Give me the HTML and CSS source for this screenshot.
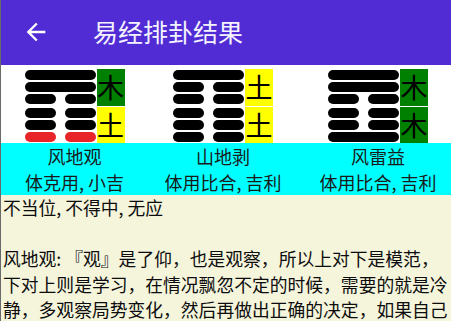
FILE: index.html
```html
<!DOCTYPE html>
<html lang="zh-CN">
<head>
<meta charset="utf-8">
<title>易经排卦结果</title>
<link rel="stylesheet" href="styles.css">
</head>
<body>
<div class="app">
  <header class="appbar">
    <svg class="back" viewBox="0 0 24 24" width="28" height="28" aria-hidden="true">
      <path fill="#fff" d="M20 11H7.830l5.59-5.59L12 4l-8 8 8 8 1.41-1.41L7.830 13H20v-2z"/>
    </svg>
    <h1 class="title">易经排卦结果</h1>
  </header>

  <section class="hexrow">
    <div class="col c1">
      <div class="hex">
        <div class="lines">
          <div class="line yang"></div>
          <div class="line yang"></div>
          <div class="line yin"><i></i><i></i></div>
          <div class="line yin lower"><i></i><i></i></div>
          <div class="line yin"><i></i><i></i></div>
          <div class="line yin moving"><i></i><i></i></div>
        </div>
        <div class="boxes">
          <div class="cell wood">木</div>
          <div class="cell earth">土</div>
        </div>
      </div>
    </div>
    <div class="col c2">
      <div class="hex">
        <div class="lines">
          <div class="line yang"></div>
          <div class="line yin"><i></i><i></i></div>
          <div class="line yin"><i></i><i></i></div>
          <div class="line yin lower"><i></i><i></i></div>
          <div class="line yin"><i></i><i></i></div>
          <div class="line yin"><i></i><i></i></div>
        </div>
        <div class="boxes">
          <div class="cell earth">土</div>
          <div class="cell earth">土</div>
        </div>
      </div>
    </div>
    <div class="col c3">
      <div class="hex">
        <div class="lines">
          <div class="line yang"></div>
          <div class="line yang"></div>
          <div class="line yin"><i></i><i></i></div>
          <div class="line yin lower"><i></i><i></i></div>
          <div class="line yin"><i></i><i></i></div>
          <div class="line yang"></div>
        </div>
        <div class="boxes">
          <div class="cell wood">木</div>
          <div class="cell wood">木</div>
        </div>
      </div>
    </div>
  </section>

  <section class="namerow">
    <div class="col c1"><div class="name">风地观</div><div class="verdict">体克用, 小吉</div></div>
    <div class="col c2"><div class="name">山地剥</div><div class="verdict">体用比合, 吉利</div></div>
    <div class="col c3"><div class="name">风雷益</div><div class="verdict">体用比合, 吉利</div></div>
  </section>

  <main class="content">
    <p>不当位, 不得中, 无应</p>
    <p>风地观: 『观』是了仰，也是观察，所以上对下是模范，下对上则是学习，在情况飘忽不定的时候，需要的就是冷静，多观察局势变化，然后再做出正确的决定，如果自己</p>
  </main>
</div>
</body>
</html>
```

FILE: styles.css
```css
html, body {
  margin: 0;
  padding: 0;
  height: 100%;
  background: #f5f5dc;
}

.app {
  min-height: 100%;
  border-left: 1px solid #6a6a6a;
  background: #f5f5dc;
  font-family: "Noto Sans CJK SC", "Noto Sans", sans-serif;
  color: #0c0c0c;
  overflow: hidden;
}

.appbar {
  height: 65px;
  background: #512cd4;
  display: flex;
  align-items: center;
  padding-left: 21px;
  box-sizing: border-box;
}

.back {
  display: block;
  margin-top: -2px;
}

.title {
  margin: -3px 0 0 43px;
  font-size: 25px;
  font-weight: 400;
  color: #f4f2ff;
  line-height: 30px;
}

.hexrow,
.namerow {
  display: grid;
  grid-template-columns: 147px 150px 1fr;
}

.hexrow {
  background: #fff;
  height: 78px;
}

.hexrow .col {
  display: flex;
  justify-content: center;
  padding-top: 4px;
}

.c3 {
  padding-left: 7px;
}

.hex {
  display: flex;
  gap: 1px;
}

.lines {
  width: 71px;
  margin-top: 1px;
}

.line {
  height: 10px;
  margin-top: 2.2px;
  border-radius: 5px;
}

.line:first-child {
  margin-top: 0;
}

.line.lower {
  margin-top: 3.4px;
}

.yang {
  background: #000;
}

.yin {
  display: flex;
  justify-content: space-between;
}

.yin i {
  display: block;
  width: 31px;
  height: 10px;
  border-radius: 5px;
  background: #000;
}

.moving i {
  background: #e8262a;
}

.boxes {
  width: 28px;
  display: flex;
  flex-direction: column;
  gap: 1px;
}

.cell {
  height: 36.5px;
  line-height: 36px;
  text-align: center;
  font-size: 27px;
  color: #000;
}

.wood {
  background: #008000;
}

.earth {
  background: #ffff00;
}

.namerow {
  background: #00ffff;
  height: 52px;
  padding-top: 1px;
  box-sizing: border-box;
  color: #1a1a1a;
  font-size: 18px;
  line-height: 25.5px;
}

.namerow .col {
  text-align: center;
  white-space: nowrap;
}

.content {
  padding: 0 0 0 2px;
  font-size: 17.8px;
  line-height: 25.5px;
}

.content p {
  margin: 0 0 25.5px 0;
}
```
